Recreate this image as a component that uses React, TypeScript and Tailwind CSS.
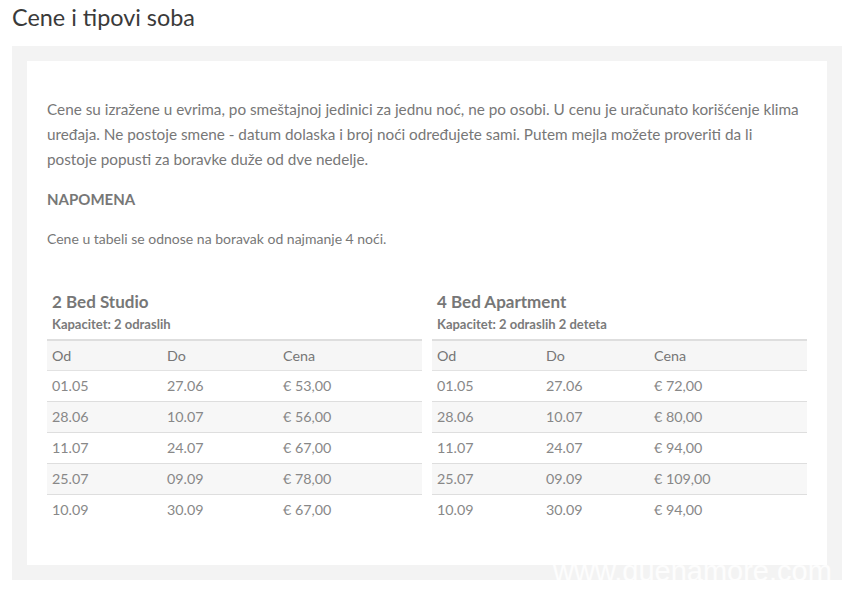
interface PriceRow {
  from: string;
  to: string;
  price: string;
}

interface RoomTable {
  name: string;
  capacity: string;
  cols: [string, string, string];
  rows: PriceRow[];
}

const rooms: RoomTable[] = [
  {
    name: '2 Bed Studio',
    capacity: 'Kapacitet: 2 odraslih',
    cols: ['w-[115px]', 'w-[116px]', ''],
    rows: [
      { from: '01.05', to: '27.06', price: '€ 53,00' },
      { from: '28.06', to: '10.07', price: '€ 56,00' },
      { from: '11.07', to: '24.07', price: '€ 67,00' },
      { from: '25.07', to: '09.09', price: '€ 78,00' },
      { from: '10.09', to: '30.09', price: '€ 67,00' },
    ],
  },
  {
    name: '4 Bed Apartment',
    capacity: 'Kapacitet: 2 odraslih 2 deteta',
    cols: ['w-[109px]', 'w-[108px]', ''],
    rows: [
      { from: '01.05', to: '27.06', price: '€ 72,00' },
      { from: '28.06', to: '10.07', price: '€ 80,00' },
      { from: '11.07', to: '24.07', price: '€ 94,00' },
      { from: '25.07', to: '09.09', price: '€ 109,00' },
      { from: '10.09', to: '30.09', price: '€ 94,00' },
    ],
  },
];

function PriceTable({ room }: { room: RoomTable }) {
  return (
    <div>
      <h3 className="px-[5px] text-[17px] leading-[22px] font-bold text-[#777]">{room.name}</h3>
      <p className="px-[5px] mt-[1px] text-[13px] leading-[20px] font-bold text-[#7a7a7a]">{room.capacity}</p>
      <table className="mt-[5px] w-full border-collapse text-[14.3px] text-[#888]">
        <thead>
          <tr className="bg-[#f6f6f6] border-t-2 border-[#dedede] border-b border-b-[#e2e2e2]">
            <th className={`${room.cols[0]} h-[30px] px-[5px] text-left font-normal text-[#777]`}>Od</th>
            <th className={`${room.cols[1]} h-[30px] px-[5px] text-left font-normal text-[#777]`}>Do</th>
            <th className="h-[30px] px-[5px] text-left font-normal text-[#777]">Cena</th>
          </tr>
        </thead>
        <tbody>
          {room.rows.map((r, i) => (
            <tr
              key={i}
              className={`${i % 2 === 1 ? 'bg-[#f7f7f7]' : 'bg-white'} ${i < room.rows.length - 1 ? 'border-b border-[#dedede]' : ''}`}
            >
              <td className="h-[31px] px-[5px]">{r.from}</td>
              <td className="h-[31px] px-[5px]">{r.to}</td>
              <td className="h-[31px] px-[5px]">{r.price}</td>
            </tr>
          ))}
        </tbody>
      </table>
    </div>
  );
}

export default function App() {
  return (
    <div className="relative w-[852px] h-[594px] bg-white font-['Lato','Open_Sans',sans-serif] overflow-hidden">
      <h1 className="px-[12px] pt-[3px] text-[23.4px] leading-[28px] text-[#3a3a3a]">Cene i tipovi soba</h1>
      <div className="mt-[15px] mx-[12px] w-[830px] p-[15px] bg-[#f3f3f3]">
        <div className="h-[504px] bg-white px-[20px] pt-[36px]">
          <p className="text-[15.3px] leading-[25px] text-[#777]">
            Cene su izražene u evrima, po smeštajnoj jedinici za jednu noć, ne po osobi. U cenu je uračunato korišćenje klima
            <br />
            uređaja. Ne postoje smene - datum dolaska i broj noći određujete sami. Putem mejla možete proveriti da li
            <br />
            postoje popusti za boravke duže od dve nedelje.
          </p>
          <h4 className="mt-[17px] text-[15px] leading-[20px] font-bold text-[#777]">NAPOMENA</h4>
          <p className="mt-[20px] text-[14px] leading-[20px] text-[#777]">Cene u tabeli se odnose na boravak od najmanje 4 noći.</p>
          <div className="mt-[42px] grid grid-cols-2 gap-[10px]">
            {rooms.map((room) => (
              <PriceTable key={room.name} room={room} />
            ))}
          </div>
        </div>
      </div>
      <div className="absolute left-[553px] top-[555px] text-[29px] leading-[32px] text-white/80 font-['Liberation_Sans',sans-serif]">
        www.quenamore.com
      </div>
    </div>
  );
}
